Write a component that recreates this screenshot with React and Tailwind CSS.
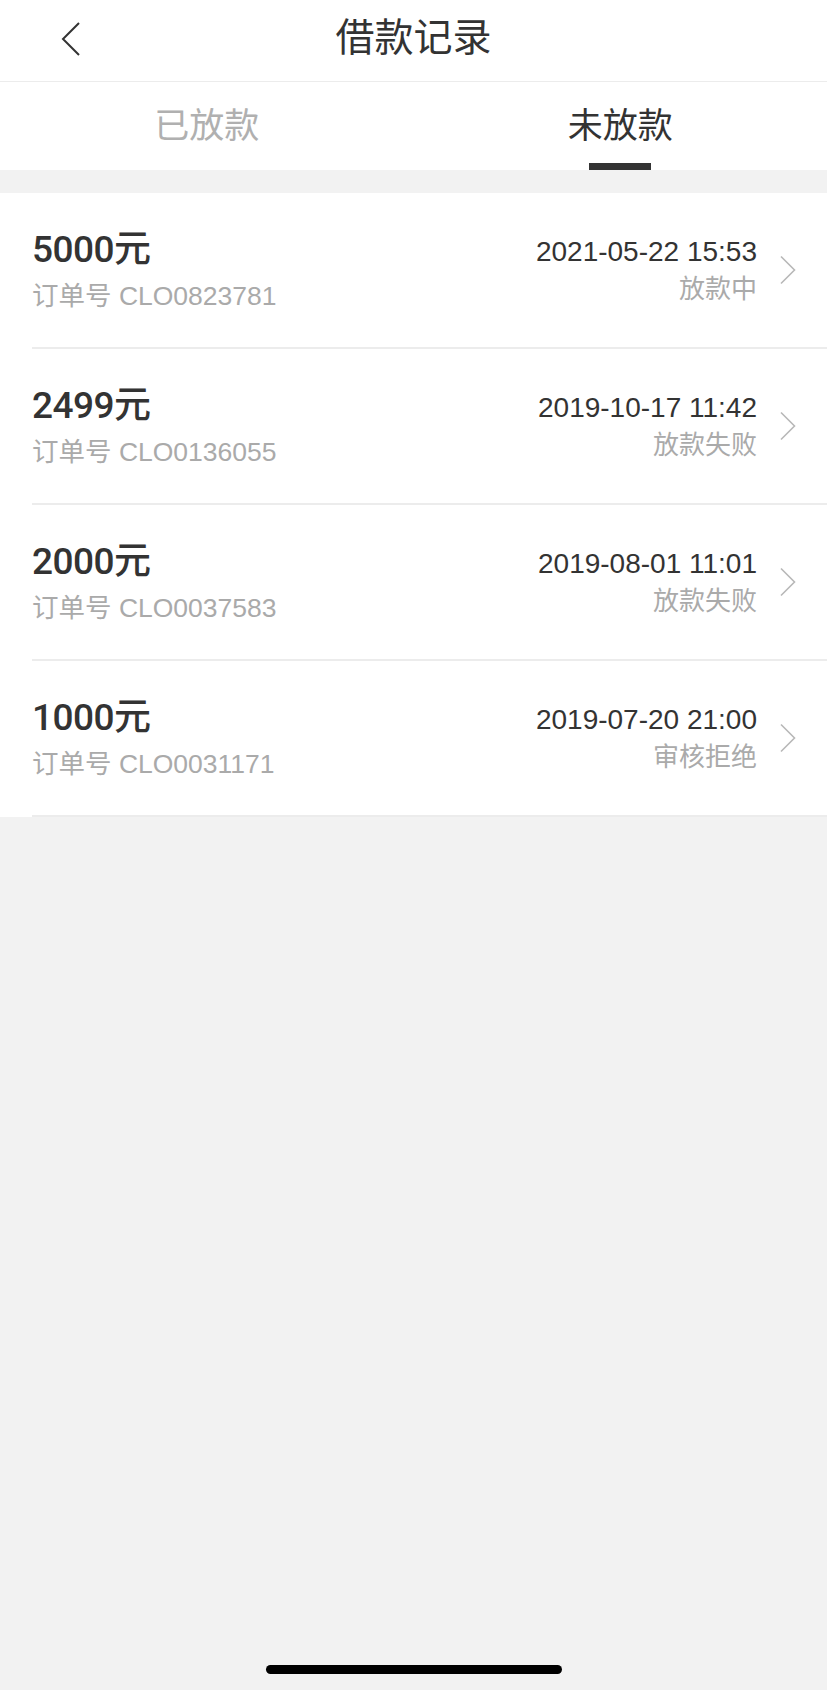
const FONT = { fontFamily: '"Liberation Sans", "Noto Sans CJK SC", sans-serif' }
const AMOUNT_FONT = { fontFamily: 'Roboto, "Noto Sans CJK SC", sans-serif' }

const RECORDS = [
  { amount: '5000元', order: 'CLO0823781', time: '2021-05-22 15:53', status: '放款中' },
  { amount: '2499元', order: 'CLO0136055', time: '2019-10-17 11:42', status: '放款失败' },
  { amount: '2000元', order: 'CLO0037583', time: '2019-08-01 11:01', status: '放款失败' },
  { amount: '1000元', order: 'CLO0031171', time: '2019-07-20 21:00', status: '审核拒绝' },
]

const BackIcon = () => (
  <svg width="22" height="36" viewBox="0 0 22 36" fill="none">
    <path d="M19 2 L3 18 L19 34" stroke="#333" strokeWidth="2" strokeLinejoin="miter" />
  </svg>
)

const Chevron = () => (
  <svg width="18" height="30" viewBox="0 0 18 30" fill="none">
    <path d="M2 1.5 L15.5 15 L2 28.5" stroke="#b8b8b8" strokeWidth="1.6" />
  </svg>
)

export default function App() {
  return (
    <div className="h-[1690px] w-full flex flex-col bg-[#f2f2f2]" style={FONT}>
      {/* nav */}
      <div className="h-[82px] bg-white border-b border-[#ececec] relative flex items-center justify-center">
        <div className="absolute left-[60px] top-[21px]">
          <BackIcon />
        </div>
        <span className="text-[39px] text-[#333] leading-none -mt-[6px]">借款记录</span>
      </div>

      {/* tabs */}
      <div className="h-[88px] bg-white flex">
        <div className="flex-1 flex flex-col items-center">
          <span className="mt-[26px] text-[35px] leading-none text-[#b0b0b0]">已放款</span>
        </div>
        <div className="flex-1 flex flex-col items-center">
          <span className="mt-[26px] text-[35px] leading-none text-[#333]">未放款</span>
          <div className="mt-auto w-[62px] h-[7px] bg-[#333]" />
        </div>
      </div>

      {/* list */}
      <div className="mt-[23px] bg-white">
        {RECORDS.map(r => (
          <div key={r.order} className="ml-[32px] h-[156px] border-b-2 border-[#ececec] flex items-center pr-[30px]">
            <div className="flex-1 flex flex-col">
              <span className="text-[37px] leading-none font-medium text-[#333] tracking-[-0.5px]" style={AMOUNT_FONT}>{r.amount}</span>
              <span className="mt-[15px] text-[26.5px] leading-none text-[#aaa]">订单号 {r.order}</span>
            </div>
            <div className="flex flex-col items-end mr-[22px]">
              <span className="text-[28px] leading-none text-[#333]">{r.time}</span>
              <span className="mt-[10px] text-[26px] leading-none text-[#aaa]">{r.status}</span>
            </div>
            <Chevron />
          </div>
        ))}
      </div>

      <div className="mt-auto mb-[16px] self-center w-[296px] h-[9px] rounded-full bg-black" />
    </div>
  )
}
